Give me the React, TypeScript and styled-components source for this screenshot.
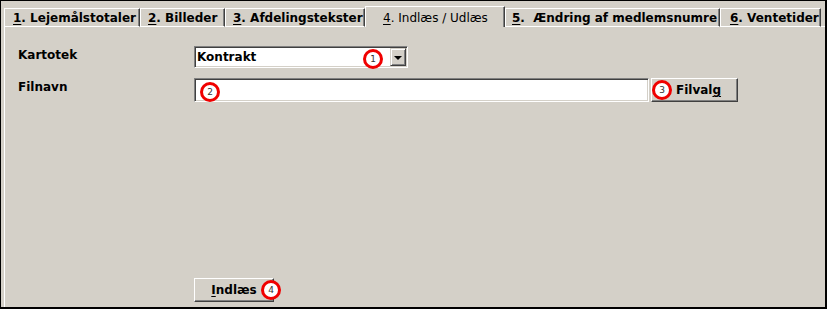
import React from 'react';
import styled, { createGlobalStyle } from 'styled-components';

const GlobalStyle = createGlobalStyle`
  html, body {
    margin: 0;
    padding: 0;
    background: #d4d0c8;
  }
  * {
    box-sizing: border-box;
  }
`;

// Classic Windows palette
const face = '#d4d0c8';
const light = '#ffffff';
const shadow = '#808080';
const dark = '#404040';

const Window = styled.div`
  width: 827px;
  height: 309px;
  display: flex;
  flex-direction: column;
  background: ${face};
  border-top: 1px solid #000;
  border-left: 1px solid #000;
  border-right: 2px solid #000;
  border-bottom: 2px solid #000;
  font-family: 'DejaVu Sans', 'Liberation Sans', sans-serif;
  font-size: 12px;
  color: #000;
`;

const TabStrip = styled.div`
  height: 26px;
  display: flex;
  align-items: flex-end;
  padding-left: 3px;
`;

const Tab = styled.div<{ $width: number; $pad: number; $active?: boolean }>`
  width: ${p => p.$width}px;
  line-height: 14px;
  white-space: nowrap;
  overflow: hidden;
  font-weight: ${p => (p.$active ? 'normal' : 'bold')};
  padding: ${p => (p.$active ? '4px 0 2px' : '2px 0 1px')};
  padding-left: ${p => p.$pad}px;
  border-top: 1px solid ${light};
  border-left: 1px solid ${light};
  border-right: 1px solid ${dark};
  border-bottom: ${p => (p.$active ? 'none' : `1px solid ${light}`)};
  box-shadow: inset -1px 0 0 ${shadow};

  u {
    text-decoration: underline;
    text-underline-offset: 2px;
  }
`;

const TabFiller = styled.div`
  flex: 1;
  border-bottom: 1px solid ${light};
`;

const Panel = styled.div`
  flex: 1;
  margin-left: 3px;
  border-left: 1px solid ${light};
  display: flex;
  flex-direction: column;
  padding: 19px 0 5px 13px;
`;

const FormGrid = styled.div`
  display: grid;
  grid-template-columns: 176px auto;
  row-gap: 10px;
  align-items: start;
`;

const Label = styled.div`
  font-weight: bold;
  line-height: 14px;
  padding-top: 2px;
`;

const ControlRow = styled.div`
  display: flex;
  gap: 2px;
`;

const Sunken = styled.div<{ $width: number; $height: number }>`
  position: relative;
  width: ${p => p.$width}px;
  height: ${p => p.$height}px;
  background: #fff;
  border-top: 1px solid ${shadow};
  border-left: 1px solid ${shadow};
  border-right: 1px solid ${light};
  border-bottom: 1px solid ${light};
  box-shadow: inset 1px 1px 0 ${dark}, inset -1px -1px 0 ${face};
  display: flex;
  align-items: center;
  padding: 1px;
`;

const ComboText = styled.span`
  flex: 1;
  font-weight: bold;
  padding-left: 1px;
  line-height: 14px;
`;

const DropButton = styled.div`
  width: 16px;
  height: 18px;
  background: ${face};
  border-top: 1px solid ${face};
  border-left: 1px solid ${face};
  border-right: 1px solid ${dark};
  border-bottom: 1px solid ${dark};
  box-shadow: inset 1px 1px 0 ${light}, inset -1px -1px 0 ${shadow};
  display: flex;
  align-items: center;
  justify-content: center;
`;

const Arrow = styled.span`
  width: 0;
  height: 0;
  border-left: 4px solid transparent;
  border-right: 4px solid transparent;
  border-top: 4px solid #000;
  margin-top: 1px;
`;

const Button = styled.div<{ $width: number }>`
  position: relative;
  width: ${p => p.$width}px;
  height: 24px;
  background: ${face};
  border-top: 1px solid ${light};
  border-left: 1px solid ${light};
  border-right: 1px solid ${dark};
  border-bottom: 1px solid ${dark};
  box-shadow: inset -1px -1px 0 ${shadow};
  display: flex;
  align-items: center;
  justify-content: center;
  font-weight: bold;
  line-height: 14px;
  padding-left: ${p => (p.$width > 82 ? 8 : 0)}px;

  u {
    text-decoration: underline;
    text-underline-offset: 2px;
  }
`;

const Marker = styled.span<{ $left?: number; $right?: number; $top?: number }>`
  position: absolute;
  ${p => (p.$left !== undefined ? `left: ${p.$left}px;` : '')}
  ${p => (p.$right !== undefined ? `right: ${p.$right}px;` : '')}
  top: ${p => (p.$top !== undefined ? `${p.$top}px` : '50%')};
  ${p => (p.$top === undefined ? 'transform: translateY(-50%);' : '')}
  width: 20px;
  height: 20px;
  border-radius: 50%;
  border: 3px solid #f00000;
  background: #fff;
  display: flex;
  align-items: center;
  justify-content: center;
  font-family: 'DejaVu Sans', sans-serif;
  font-weight: normal;
  font-size: 9px;
  line-height: 1;
  color: #333;
`;

const Footer = styled.div`
  margin-top: auto;
  padding-left: 176px;
`;

const tabs = [
  { key: '1', label: '. Lejemålstotaler', width: 136, pad: 8 },
  { key: '2', label: '. Billeder', width: 85, pad: 7 },
  { key: '3', label: '. Afdelingstekster', width: 140, pad: 7 },
  { key: '4', label: '. Indlæs / Udlæs', width: 140, pad: 17, active: true },
  { key: '5', label: '.\u00a0 Ændring af medlemsnumre', width: 215, pad: 6 },
  { key: '6', label: '. Ventetider', width: 101, pad: 9 },
];

export default function App() {
  return (
    <>
      <GlobalStyle />
      <Window>
        <TabStrip>
          {tabs.map(tab => (
            <Tab key={tab.key} $width={tab.width} $pad={tab.pad} $active={tab.active}>
              <u>{tab.key}</u>
              {tab.label}
            </Tab>
          ))}
          <TabFiller />
        </TabStrip>

        <Panel>
          <FormGrid>
            <Label>Kartotek</Label>
            <Sunken $width={214} $height={22}>
              <ComboText>Kontrakt</ComboText>
              <DropButton>
                <Arrow />
              </DropButton>
              <Marker $left={168} $top={2}>1</Marker>
            </Sunken>

            <Label>Filnavn</Label>
            <ControlRow>
              <Sunken $width={455} $height={24}>
                <Marker $left={5} $top={3}>2</Marker>
              </Sunken>
              <Button $width={87}>
                Filval<u>g</u>
                <Marker $left={0}>3</Marker>
              </Button>
            </ControlRow>
          </FormGrid>

          <Footer>
            <Button $width={80}>
              <u>I</u>ndlæs
              <Marker $right={-8}>4</Marker>
            </Button>
          </Footer>
        </Panel>
      </Window>
    </>
  );
}
